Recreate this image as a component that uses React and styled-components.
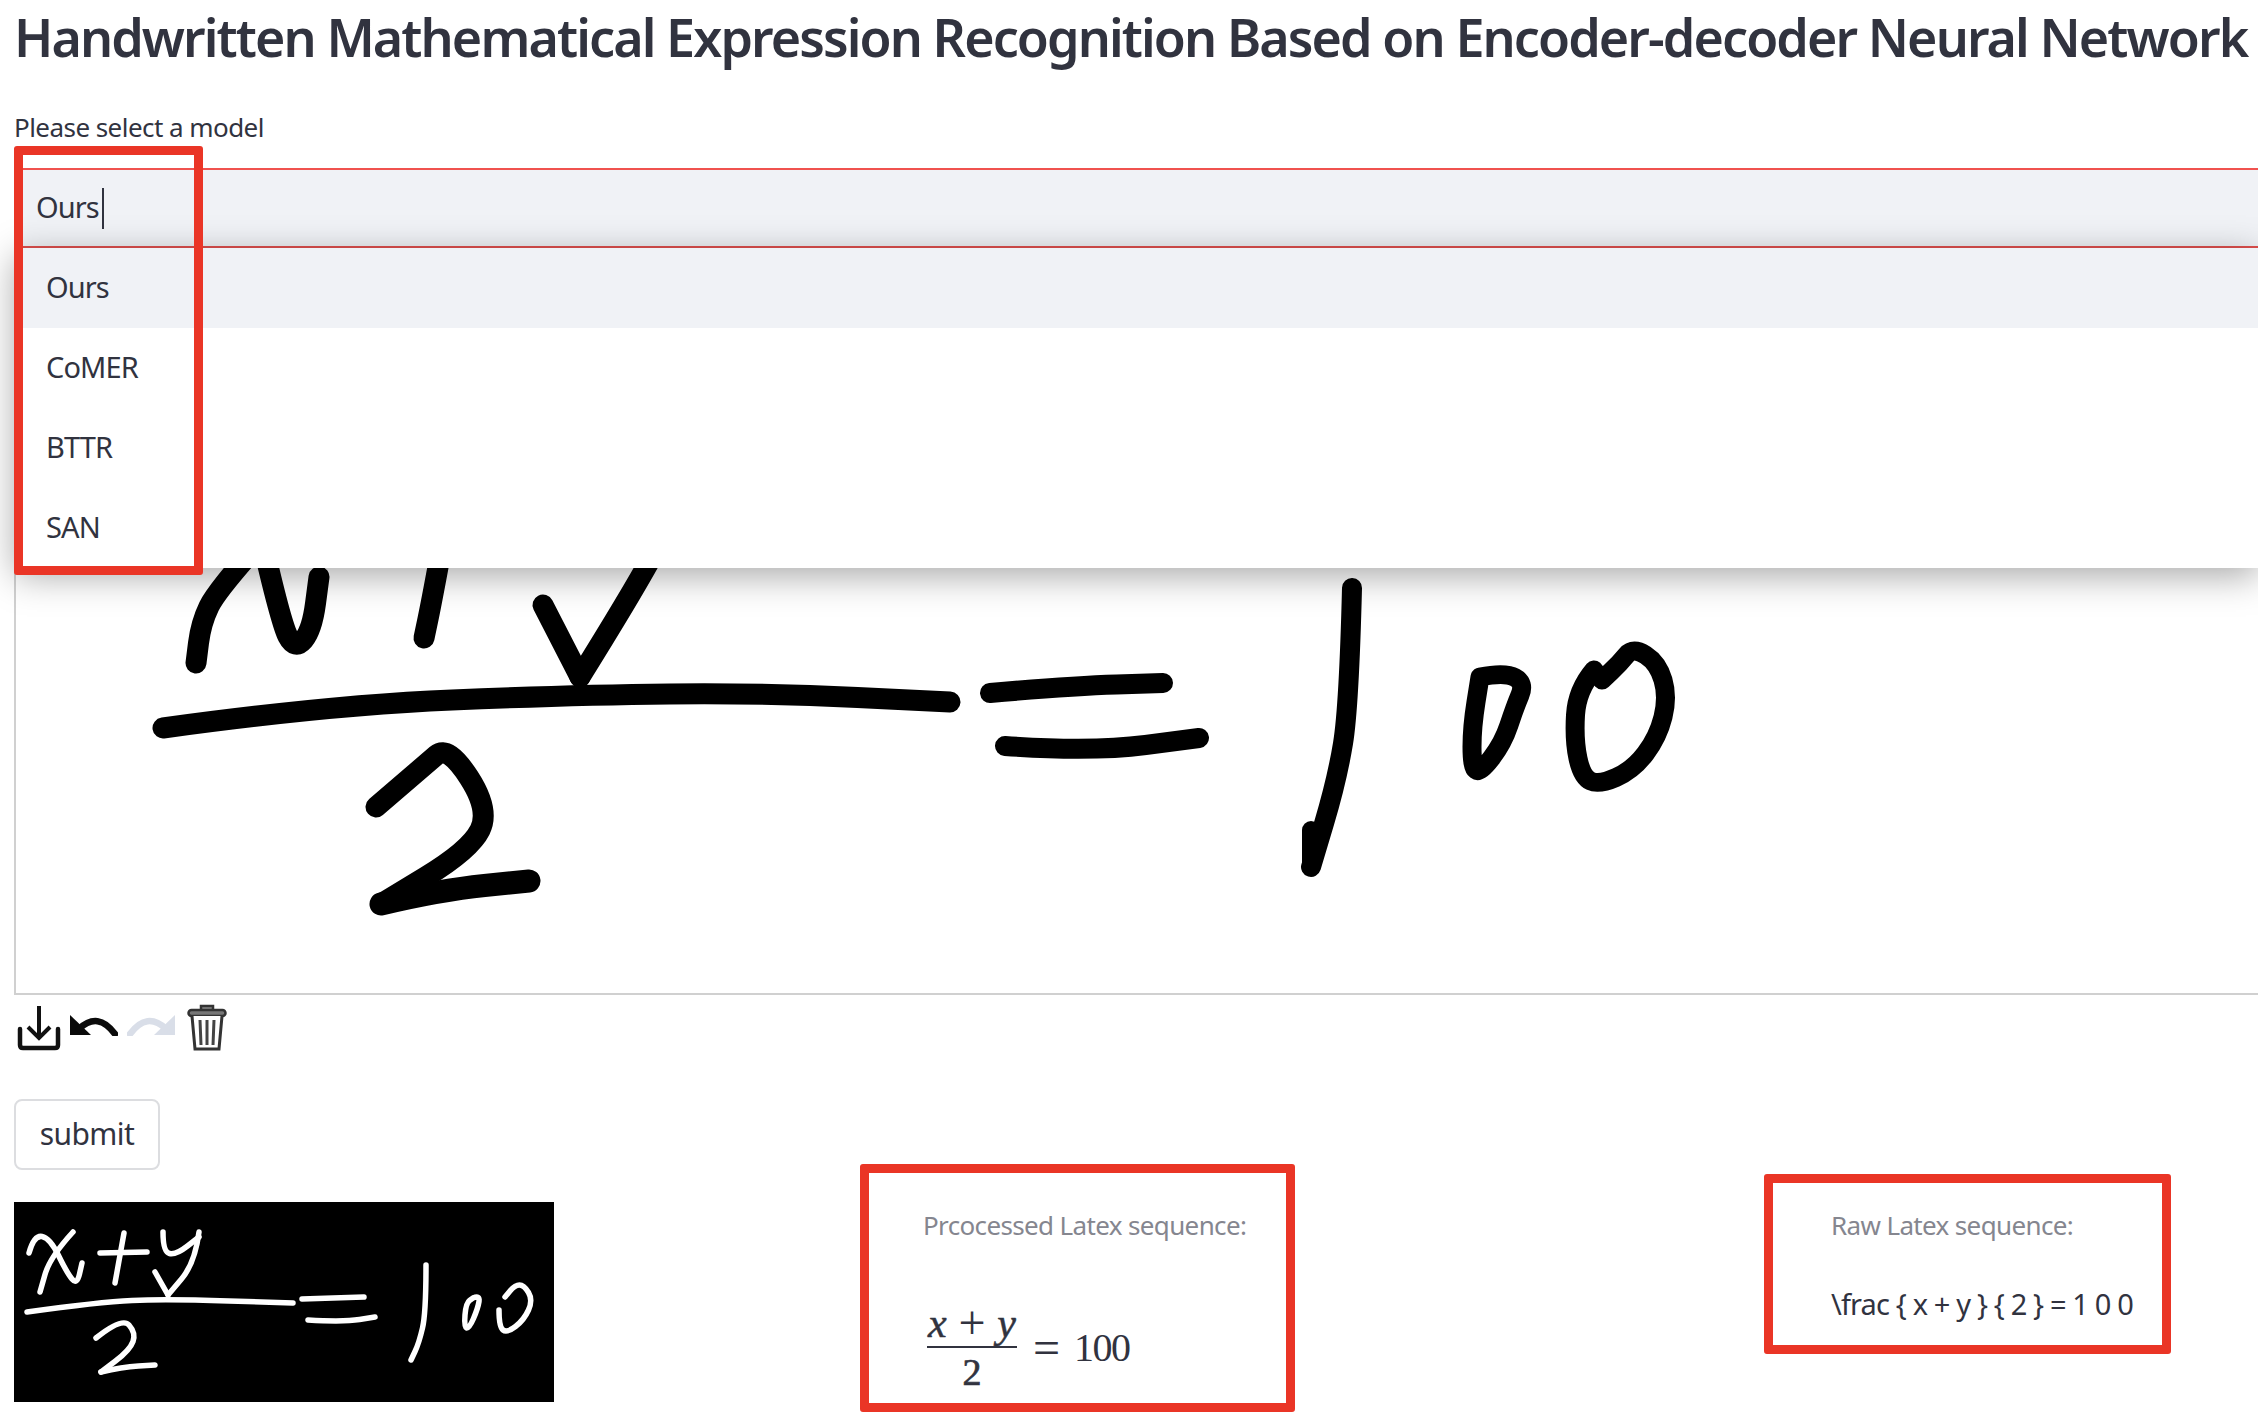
import React from 'react';
import styled, { createGlobalStyle } from 'styled-components';

const GlobalStyle = createGlobalStyle`
  html, body {
    margin: 0;
    padding: 0;
    width: 2258px;
    height: 1412px;
    overflow: hidden;
    background: #fff;
    font-family: "Noto Sans", sans-serif;
    color: #31333f;
  }
`;

const Page = styled.div`
  width: 2258px;
  height: 1412px;
  padding-left: 14px;
  box-sizing: border-box;
  overflow: hidden;
`;

const Title = styled.h1`
  margin: -2px 0 0 0;
  height: 78px;
  line-height: 78px;
  font-size: 52px;
  font-weight: 650;
  letter-spacing: -1.9px;
  white-space: nowrap;
`;

const FieldLabel = styled.div`
  margin-top: 33px;
  height: 36px;
  line-height: 36px;
  font-size: 26px;
  letter-spacing: -0.55px;
`;

const SelectWrap = styled.div`
  position: relative;
  margin-top: 23px;
  z-index: 2;
`;

const SelectField = styled.div`
  display: flex;
  align-items: center;
  height: 73px;
  padding: 0 0 3px 22px;
  background: #f0f2f6;
  border-top: 2px solid #f0524f;
  border-bottom: 2px solid #e0504e;
  font-size: 29px;
  letter-spacing: -0.9px;
`;

const Caret = styled.span`
  width: 2px;
  height: 41px;
  margin: 3px 0 0 3px;
  background: #31333f;
`;

const Dropdown = styled.ul`
  position: absolute;
  top: 80px;
  left: 1px;
  right: 0;
  margin: 0;
  padding: 0;
  list-style: none;
  background: #fff;
  box-shadow: 0 8px 34px rgba(0, 0, 0, 0.34);
`;

const Option = styled.li`
  height: 77px;
  display: flex;
  align-items: center;
  padding: 0 0 3px 31px;
  font-size: 29px;
  letter-spacing: -0.9px;
  background: ${(p) => (p.$active ? '#f0f2f6' : '#fff')};
`;

const Annotation = styled.div`
  position: absolute;
  top: -22px;
  left: 0;
  width: 189px;
  height: 429px;
  box-sizing: border-box;
  border: 9px solid #ea3526;
  border-radius: 3px;
`;

const Canvas = styled.div`
  height: 707px;
  margin-top: 40px;
  box-sizing: border-box;
  border-left: 2px solid #d0d0d0;
  border-bottom: 2px solid #d0d0d0;
  overflow: hidden;
`;

const Drawing = styled.svg`
  display: block;
  width: 100%;
  height: 100%;
`;

const Toolbar = styled.div`
  display: flex;
  align-items: flex-start;
  height: 50px;
  margin-top: 10px;
`;

const ToolIcon = styled.svg`
  display: block;
  flex: none;
  margin-left: ${(p) => p.$gap}px;
  margin-top: ${(p) => p.$top}px;
`;

const SubmitButton = styled.button`
  display: block;
  width: 146px;
  height: 71px;
  margin-top: 44px;
  padding: 0 0 2px;
  background: #fff;
  border: 2px solid #dcdde0;
  border-radius: 8px;
  font-family: inherit;
  font-size: 30px;
  letter-spacing: -0.6px;
  color: #31333f;
`;

const ResultRow = styled.div`
  display: grid;
  grid-template-columns: 846px 904px 407px;
  margin-top: -6px;
  align-items: start;
`;

const ResultImage = styled.svg`
  display: block;
  width: 540px;
  height: 200px;
  margin-top: 38px;
  background: #000;
`;

const ResultBox = styled.div`
  box-sizing: border-box;
  width: ${(p) => p.$width}px;
  height: ${(p) => p.$height}px;
  margin-top: ${(p) => p.$top}px;
  padding: ${(p) => p.$padTop}px 0 0 ${(p) => p.$padLeft}px;
  border: 9px solid #ea3526;
  border-radius: 3px;
`;

const Caption = styled.div`
  height: 36px;
  line-height: 36px;
  font-size: 26px;
  letter-spacing: -0.64px;
  color: #85868f;
  white-space: nowrap;
`;

const RawLatex = styled.div`
  height: 44px;
  line-height: 44px;
  margin-top: 39px;
  font-size: 29px;
  letter-spacing: -0.85px;
  white-space: nowrap;
`;

const MathLine = styled.div`
  display: flex;
  align-items: center;
  margin: 59px 0 0 4px;
  font-family: "Liberation Serif", serif;
  font-size: 40px;
  line-height: 1;
`;

const Fraction = styled.div`
  display: flex;
  flex-direction: column;
  align-items: center;
  width: 90px;
`;

const Numerator = styled.div`
  display: flex;
  justify-content: space-between;
  align-items: center;
  align-self: stretch;
  height: 42px;
  padding: 0 1px 2px;
  border-bottom: 2px solid #31333f;
  font-size: 42px;
  line-height: 42px;
`;

const PlusSign = styled.span`
  font-size: 48px;
  line-height: 42px;
`;

const Denominator = styled.div`
  padding-top: 5px;
  font-size: 38px;
  line-height: 38px;
  -webkit-text-stroke: 0.7px #31333f;
`;

const MathVar = styled.i`
  font-style: italic;
  -webkit-text-stroke: 0.5px #31333f;
`;

const MathRest = styled.div`
  display: flex;
  align-items: center;
  margin: 3px 0 0 16px;
  gap: 14px;
`;

const EqualsSign = styled.span`
  font-size: 48px;
`;

const Digits = styled.span`
  letter-spacing: -1.5px;
`;

const ink = (pts) => {
  let d = `M${pts[0][0]} ${pts[0][1]}`;
  for (let i = 1; i < pts.length - 1; i++) {
    const mx = (pts[i][0] + pts[i + 1][0]) / 2;
    const my = (pts[i][1] + pts[i + 1][1]) / 2;
    d += ` Q${pts[i][0]} ${pts[i][1]} ${mx} ${my}`;
  }
  const last = pts[pts.length - 1];
  return `${d} L${last[0]} ${last[1]}`;
};

const canvasStrokes = [
  { w: 21, pts: [[262, 540], [217, 590], [201, 623], [196, 663]] },
  { w: 21, pts: [[262, 540], [281, 623], [295, 650], [312, 630], [319, 577]] },
  { w: 21, pts: [[443, 540], [432, 600], [424, 638]] },
  { w: 21, pts: [[543, 605], [580, 677]] },
  { w: 21, pts: [[580, 677], [631, 595], [672, 520]] },
  { w: 21, pts: [[163, 728], [330, 705], [574, 695], [765, 693], [950, 702]] },
  { w: 21, pts: [[376, 807], [425, 765], [448, 745], [490, 810], [470, 850], [381, 904]] },
  { w: 23, pts: [[381, 904], [440, 890], [529, 881]] },
  { w: 20, pts: [[990, 693], [1070, 686], [1163, 683]] },
  { w: 20, pts: [[1005, 746], [1092, 752], [1199, 738]] },
  { w: 20, pts: [[1352, 588], [1349, 707], [1337, 780], [1311, 867]] },
  { w: 18, pts: [[1311, 830], [1311, 867]] },
  { w: 19, pts: [[1480, 677], [1505, 672], [1525, 683], [1515, 707], [1503, 743], [1480, 773], [1472, 767], [1472, 727], [1480, 677]] },
  { w: 19, pts: [[1594, 670], [1577, 690], [1574, 740], [1582, 777], [1599, 785], [1633, 770], [1658, 737], [1668, 697], [1658, 663], [1633, 647], [1620, 663], [1602, 680]] },
];

const previewStrokes = [
  [[29, 51], [34, 33], [50, 36], [67, 71], [77, 83], [82, 61]],
  [[73, 30], [50, 55], [40, 90]],
  [[100, 51], [147, 50]],
  [[124, 31], [115, 81]],
  [[163, 30], [163, 50], [176, 53], [199, 35]],
  [[199, 30], [195, 61], [168, 93]],
  [[168, 93], [155, 70]],
  [[27, 110], [99, 100], [165, 97], [293, 101]],
  [[96, 136], [122, 115], [136, 131], [130, 148], [101, 170]],
  [[101, 170], [122, 165], [155, 163]],
  [[302, 97], [364, 95]],
  [[308, 118], [344, 120], [375, 115]],
  [[426, 63], [426, 111], [419, 141], [411, 158]],
  [[473, 96], [480, 93], [478, 106], [469, 127], [464, 125], [466, 101], [473, 96]],
  [[499, 108], [499, 125], [507, 131], [524, 118], [533, 98], [524, 83], [515, 83], [505, 95]],
];

const UndoIcon = ({ color, flip, gap }) => (
  <ToolIcon $gap={gap} $top={10} width="48" height="21" viewBox="0 0 48 21">
    <g transform={flip ? 'translate(48 0) scale(-1 1)' : undefined} fill={color}>
      <path d="M0 0V20H21Z" />
      <path d="M9 14Q28 -4 45 19" fill="none" stroke={color} strokeWidth="6.5" strokeLinecap="round" />
    </g>
  </ToolIcon>
);

const App = () => {
  return (
    <>
      <GlobalStyle />
      <Page>
        <Title>Handwritten Mathematical Expression Recognition Based on Encoder-decoder Neural Network</Title>
        <FieldLabel>Please select a model</FieldLabel>
        <SelectWrap>
          <SelectField>
            Ours
            <Caret />
          </SelectField>
          <Dropdown>
            <Option $active>Ours</Option>
            <Option>CoMER</Option>
            <Option>BTTR</Option>
            <Option>SAN</Option>
          </Dropdown>
          <Annotation />
        </SelectWrap>
        <Canvas>
          <Drawing viewBox="16 288 2242 705" preserveAspectRatio="xMinYMin slice">
            {canvasStrokes.map((s, i) => (
              <path key={i} d={ink(s.pts)} fill="none" stroke="#000" strokeWidth={s.w} strokeLinecap="round" strokeLinejoin="round" />
            ))}
          </Drawing>
        </Canvas>
        <Toolbar>
          <ToolIcon $gap={3} $top={0} width="44" height="46" viewBox="0 0 44 46">
            <path d="M3 24V40Q3 43 6 43H38Q41 43 41 40V24" fill="none" stroke="#111" strokeWidth="4.5" strokeLinecap="round" />
            <path d="M22 1V32M11 22L22 33L33 22" fill="none" stroke="#111" strokeWidth="4" />
          </ToolIcon>
          <UndoIcon color="#0a0a0a" gap={9} />
          <UndoIcon color="#d9dee8" flip gap={9} />
          <ToolIcon $gap={12} $top={-1} width="40" height="47" viewBox="0 0 40 47">
            <path d="M14 6V2H26V6" fill="#888" stroke="#333" strokeWidth="2.5" />
            <rect x="1.5" y="6" width="37" height="6" rx="3" fill="#777" stroke="#333" strokeWidth="2.5" />
            <path d="M5 12L8 45H32L35 12" fill="#fff" stroke="#333" strokeWidth="3" />
            <path d="M13 16L14 41M20 16V41M27 16L26 41" fill="none" stroke="#444" strokeWidth="3" />
          </ToolIcon>
        </Toolbar>
        <SubmitButton>submit</SubmitButton>
        <ResultRow>
          <ResultImage viewBox="14 0 540 200">
            {previewStrokes.map((pts, i) => (
              <path key={i} d={ink(pts)} fill="none" stroke="#fff" strokeWidth="5.5" strokeLinecap="round" strokeLinejoin="round" />
            ))}
          </ResultImage>
          <ResultBox $width={435} $height={248} $top={0} $padTop={34} $padLeft={54}>
            <Caption>Prcocessed Latex sequence:</Caption>
            <MathLine>
              <Fraction>
                <Numerator>
                  <MathVar>x</MathVar>
                  <PlusSign>+</PlusSign>
                  <MathVar>y</MathVar>
                </Numerator>
                <Denominator>2</Denominator>
              </Fraction>
              <MathRest>
                <EqualsSign>=</EqualsSign>
                <Digits>100</Digits>
              </MathRest>
            </MathLine>
          </ResultBox>
          <ResultBox $width={407} $height={180} $top={10} $padTop={24} $padLeft={58}>
            <Caption>Raw Latex sequence:</Caption>
            <RawLatex>\frac {'{'} x + y {'}'} {'{'} 2 {'}'} = 1 0 0</RawLatex>
          </ResultBox>
        </ResultRow>
      </Page>
    </>
  );
};

export default App;
